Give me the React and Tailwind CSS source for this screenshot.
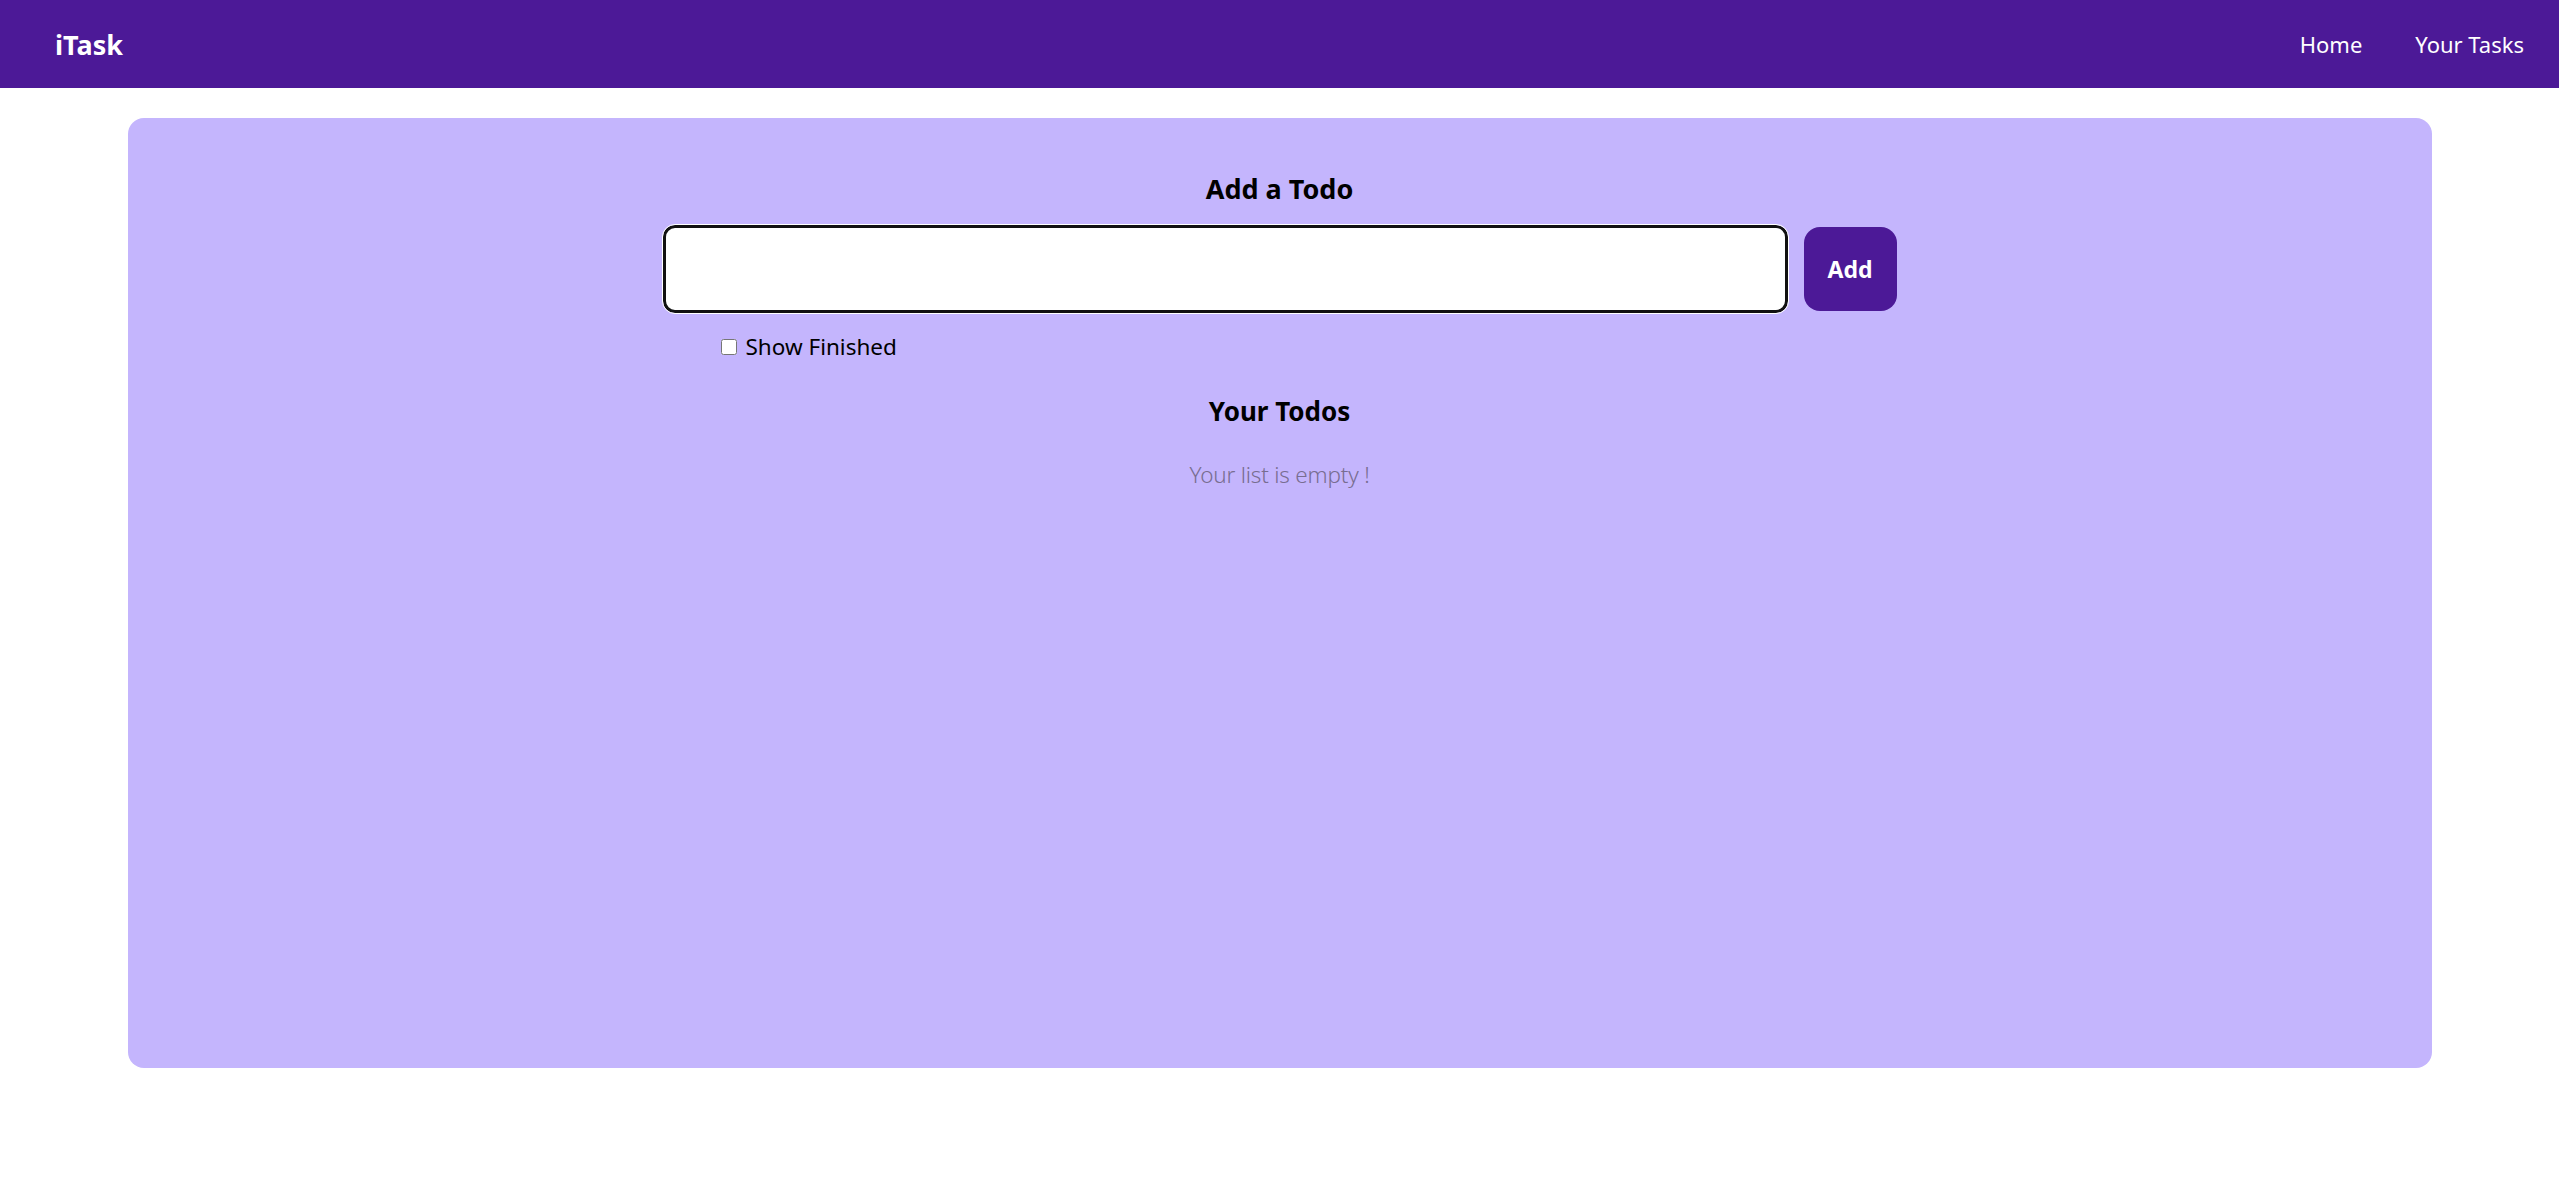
import { useState } from "react";

export default function App() {
  const [todo, setTodo] = useState("");
  const [showFinished, setShowFinished] = useState(false);
  const todos = [];

  return (
    <div className="min-h-screen bg-white font-['Noto_Sans',sans-serif]">
      <nav className="flex h-[88px] items-center justify-between bg-[#4c1997] text-white">
        <div className="pl-[55px] text-[27px] font-bold leading-none">iTask</div>
        <ul className="flex items-center gap-[53px] pr-[35px] text-[22px] leading-none">
          <li className="cursor-pointer">Home</li>
          <li className="cursor-pointer">Your Tasks</li>
        </ul>
      </nav>

      <div className="mx-auto mt-[30px] min-h-[950px] w-[2304px] rounded-[16px] bg-[#c4b5fd] p-[30px]">
        <div className="mx-auto flex w-[1234px] flex-col">
          <h2 className="mt-[23px] text-center text-[27px] font-bold leading-[36px] text-black">
            Add a Todo
          </h2>
          <div className="mt-[18px] flex items-center gap-[16px]">
            <input
              type="text"
              value={todo}
              onChange={(e) => setTodo(e.target.value)}
              className="h-[88px] flex-1 rounded-[12px] border-[3px] border-[#111] bg-white px-4 text-[24px] outline outline-1 outline-white"
            />
            <button className="h-[84px] w-[93px] rounded-[16px] bg-[#4c1997] text-[23px] font-bold text-white">
              Add
            </button>
          </div>
          <label className="ml-[58px] mt-[18px] flex items-center gap-[9px] text-[22.5px] leading-[32px] text-black">
            <input
              type="checkbox"
              checked={showFinished}
              onChange={() => setShowFinished(!showFinished)}
              className="h-[16px] w-[16px]"
            />
            Show Finished
          </label>
        </div>

        <h2 className="mt-[30px] text-center text-[26px] font-bold leading-[36px] text-black">
          Your Todos
        </h2>
        <div className="mt-[30px] flex flex-col items-center">
          {todos.length === 0 && (
            <div className="text-[22.5px] font-light leading-[32px] tracking-[-0.2px] text-[#786d90]">
              Your list is empty !
            </div>
          )}
        </div>
      </div>
    </div>
  );
}
